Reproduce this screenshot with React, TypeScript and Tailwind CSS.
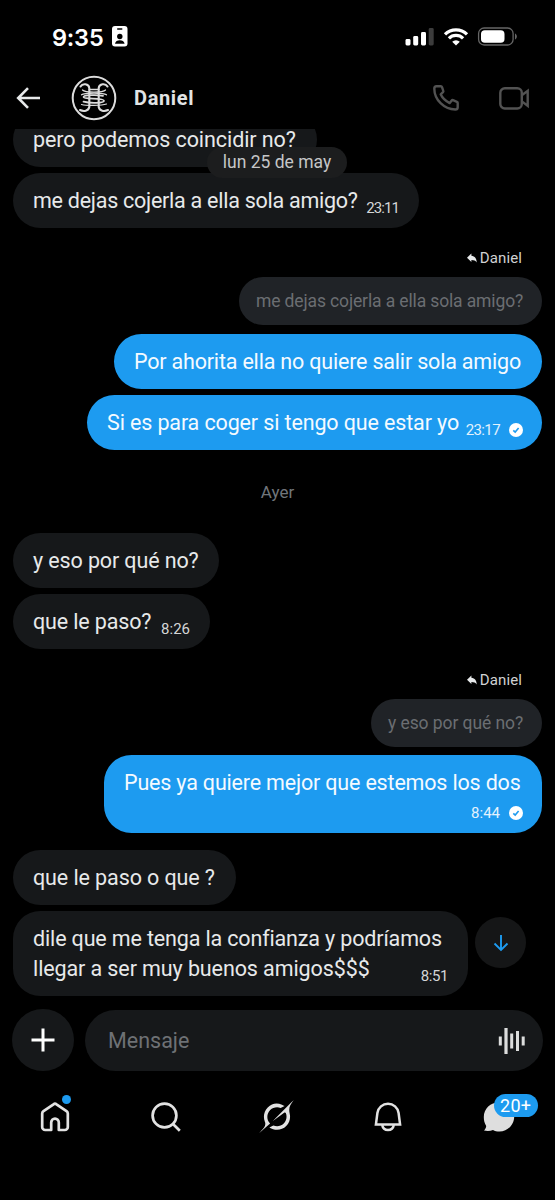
import React from "react";

interface BubbleProps {
  className: string;
  lines: string[];
  tracking: string[];
  time?: string;
  timeClass?: string;
  sent?: boolean;
}

function Check() {
  return (
    <svg viewBox="0 0 14 14" className="ml-[9px] h-[14px] w-[14px]">
      <circle cx="7" cy="7" r="7" fill="#fff" />
      <path d="M4.3 7.3l1.9 1.8 3.4-4" fill="none" stroke="#1d9bf0" strokeWidth="1.6" />
    </svg>
  );
}

function Bubble({ className, lines, tracking, time, timeClass = "", sent = false }: BubbleProps) {
  return (
    <div
      className={`relative shrink-0 rounded-[27.5px] px-5 pt-[13px] text-[21.5px] leading-[30px] whitespace-nowrap ${
        sent ? "self-end bg-[#1d9bf0] text-[#f4faff]" : "bg-[#16181a] text-[#e7e9ea]"
      } ${className}`}
    >
      {lines.map((line, i) => (
        <p key={line} className={tracking[i]}>
          {line}
        </p>
      ))}
      {time && (
        <div
          className={`absolute bottom-[10px] flex items-center text-[15px] leading-5 ${
            sent ? "right-[19px] text-[#e3f2fd]" : "right-5 text-[#d4d6d7]"
          }`}
        >
          <span className={timeClass}>{time}</span>
          {sent && <Check />}
        </div>
      )}
    </div>
  );
}

function Quote({ className, tracking, text }: { className: string; tracking: string; text: string }) {
  return (
    <>
      <div className="mr-[20px] flex shrink-0 items-center gap-[3px] self-end text-[15px] leading-5 text-[#d0d2d3]">
        <svg viewBox="0 0 10 10" className="h-[10px] w-[10px]" fill="#e7e9ea">
          <path d="M4.4 0.4v2.300c3.600.300 5.200 2.900 5.300 6.700C8.600 7.600 6.900 6.900 4.400 6.900v2.100L0 4.700z" />
        </svg>
        <span className="tracking-[0.1px]">Daniel</span>
      </div>
      <div
        className={`mt-[9px] mb-[9px] h-12 shrink-0 self-end rounded-[24px] bg-[#202327] px-[17px] text-[17.5px] leading-[49px] whitespace-nowrap text-[#6b6e72] ${className}`}
      >
        <span className={tracking}>{text}</span>
      </div>
    </>
  );
}

function StatusBar() {
  return (
    <div className="flex h-[60px] shrink-0 items-start pt-[25px]">
      <span className="ml-[52px] w-[60px] pt-px font-['Inter'] text-[23.5px] leading-6 font-semibold tracking-[-0.2px] text-white">
        9:35
      </span>
      <svg viewBox="0 0 16 21" className="mt-[1px] h-[21px] w-4">
        <rect width="15.5" height="20.5" rx="3" fill="#fff" />
        <rect x="5" y="2.2" width="5.5" height="1.5" rx=".7" fill="#000" />
        <circle cx="7.8" cy="10.5" r="2.700" fill="#000" />
        <path d="M3 17.8c.3-2.500 2.500-3.500 4.800-3.500s4.500 1 4.800 3.500z" fill="#000" />
      </svg>
      <svg viewBox="0 0 112 20" className="mt-[2px] mr-[38px] ml-auto h-5 w-[112px]">
        <g fill="#fff">
          <rect x=".5" y="12" width="5" height="6.5" rx="1.4" />
          <rect x="8.2" y="9" width="5" height="9.5" rx="1.4" />
          <rect x="16" y="5" width="5" height="13.5" rx="1.4" />
          <rect x="23.7" y="1" width="5" height="17.5" rx="1.4" fill="#3c3c3c" />
        </g>
        <g fill="none" stroke="#fff" strokeWidth="3.2">
          <path d="M40 7.400a15.500 15.500 0 0 1 22 0" />
          <path d="M43.900 11.400a10 10 0 0 1 14.200 0" />
        </g>
        <path d="M47.200 14.700a5.400 5.400 0 0 1 7.600 0L51 18.500z" fill="#fff" />
        <rect x="73.600" y="1" width="34.500" height="17" rx="5.500" fill="none" stroke="#666" strokeWidth="1.3" />
        <rect x="76" y="3.300" width="23.500" height="12.500" rx="3.800" fill="#fff" />
        <path d="M110 6.500c2.400 1 2.400 5 0 6z" fill="#666" />
      </svg>
    </div>
  );
}

function Header() {
  return (
    <header className="flex h-[69px] shrink-0 items-center pt-[7px]">
      <svg viewBox="0 0 24 22" className="ml-[16px] h-[22px] w-6" fill="none" stroke="#e7e9ea" strokeWidth="2.600">
        <path d="M24 11H2.500M12 1.200L2.200 11l9.800 9.800" />
      </svg>
      <svg viewBox="0 0 46 46" className="ml-[31px] h-[46px] w-[46px]" fill="none" stroke="#dcdcdc">
        <circle cx="23" cy="23" r="21.300" strokeWidth="2" />
        <g strokeWidth="2.100" strokeLinecap="round">
          <path d="M9.500 11.500c2-3.500 8.300-3 8.800 1.500v19c-.8 4-5.500 4.800-9.300 3" />
          <path d="M36.500 11.500c-2-3.500-8.300-3-8.800 1.500v19c.8 4 5.500 4.800 9.300 3" />
          <path d="M18.300 14.500h9.400" strokeWidth="1.500" />
          <path d="M11.500 15c2.500 2.800 20.500 2.800 23 0" strokeWidth="1.200" />
          <path d="M10.500 19.800c3-2.300 22-2.300 25 0" strokeWidth="1.200" />
          <path d="M32 20.800c-6-1-19.500-1-19.500 1.300 0 2.500 20.500.5 20.500 3.700 0 2.500-14 2.700-20.500.9" strokeWidth="1.800" />
          <path d="M10.500 29.500c5 1.300 20 1.300 25-.5" strokeWidth="1.200" />
        </g>
      </svg>
      <h1 className="ml-[17px] text-[20px] font-bold tracking-[0.65px] text-[#e2e4e5]">Daniel</h1>
      <svg viewBox="0 0 26 26" className="mr-[40px] ml-auto h-[26px] w-[26px]" fill="none" stroke="#525252" strokeWidth="2.400" strokeLinejoin="round">
        <path d="M3.500 1.300h4.300c.6 0 1 .3 1.200.9l1.300 3.700c.2.500 0 1-.3 1.300L7.700 9.300c1.500 3.400 5.400 7 9 8.800l2-2.600c.3-.4.800-.5 1.300-.3l3.900 1.600c.5.200.8.600.8 1.100v4.300c0 1.300-1 2.300-2.400 2.300C11 24.200 1.400 14.800 1.300 3.700c0-1.400.8-2.400 2.200-2.400z" />
      </svg>
      <svg viewBox="0 0 31 23" className="mr-[25px] h-[23px] w-[31px]" fill="none" stroke="#525252" strokeWidth="2.400">
        <rect x="1.300" y="1.300" width="21.500" height="20.200" rx="4.500" />
        <path d="M22.800 8.200l5.900-4.400v15l-5.900-4.400" />
      </svg>
    </header>
  );
}

function TabBar() {
  return (
    <nav className="grid h-[60px] w-[554px] shrink-0 grid-cols-5 items-center justify-items-center">
      <div className="relative">
        <svg viewBox="0 0 30 30" className="h-[30px] w-[30px]" fill="none" stroke="#e2e2e2" strokeWidth="2.700" strokeLinejoin="round">
          <path d="M11.200 28H5.200a3 3 0 0 1-3-3V11.600c0-1 .5-1.800 1.300-2.400L13.500 2.300a2.500 2.500 0 0 1 3 0l10 6.900c.8.600 1.300 1.400 1.300 2.400V25a3 3 0 0 1-3 3h-6v-7.500a3.800 3.800 0 0 0-7.600 0z" />
        </svg>
        <span className="absolute -top-[7px] -right-[1px] h-[9px] w-[9px] rounded-full bg-[#1d9bf0]" />
      </div>
      <svg viewBox="0 0 30 30" className="h-[30px] w-[30px]" fill="none" stroke="#e2e2e2" strokeWidth="2.700">
        <circle cx="13.500" cy="13.500" r="11.900" />
        <path d="M22 22l6.800 6.800" />
      </svg>
      <svg viewBox="0 0 24 24" className="-mt-px h-[35px] w-[35px]" fill="#e2e2e2">
        <path d="M9.270 15.290l7.978-5.897c.391-.29.950-.177 1.137.272.980 2.369.542 5.215-1.410 7.169-1.951 1.954-4.667 2.382-7.149 1.406l-2.711 1.257c3.889 2.661 8.611 2.003 11.562-.953 2.341-2.344 3.066-5.539 2.388-8.420l.006.007c-.983-4.232.242-5.924 2.750-9.383.060-.082.120-.164.179-.248l-3.301 3.305v-.010L9.267 15.292M7.623 16.723c-2.792-2.670-2.310-6.801.071-9.184 1.761-1.763 4.647-2.483 7.166-1.425l2.705-1.250a7.808 7.808 0 0 0-1.829-1A8.975 8.975 0 0 0 5.984 5.830c-2.533 2.536-3.330 6.436-1.962 9.764 1.022 2.487-.653 4.246-2.340 6.022-.599.630-1.199 1.259-1.682 1.925l7.620-6.815" />
      </svg>
      <svg viewBox="0 0 28 30" className="h-[30px] w-7" fill="none" stroke="#e2e2e2" strokeWidth="2.500">
        <path d="M1.900 22.600L3.400 11a10.700 10.700 0 0 1 21.200 0l1.500 11.600z" />
        <path d="M8.200 23c.6 3.300 3 5.100 5.800 5.100s5.200-1.800 5.800-5.100" />
      </svg>
      <div className="relative">
        <svg viewBox="0 0 32 30" className="h-[30px] w-8" fill="#dedede">
          <path d="M16 .5c8.600 0 15.200 6 15.200 14 0 8.500-6.600 15-14.700 15-2.600 0-4.700-.5-6.500-1.500-2.500 1-5.700 1.300-9 .5 1.400-1.600 2.100-3 2.200-4.600C1.500 21.300.8 18.300.8 15 .8 6.500 7.500.5 16 .5z" />
        </svg>
        <span className="absolute -top-[8px] left-[11px] h-[23px] w-11 rounded-full bg-[#1d9bf0] text-center text-[18px] leading-[23px] tracking-[0.2px] text-white">
          20+
        </span>
      </div>
    </nav>
  );
}

export default function App() {
  return (
    <div className="flex h-[1200px] w-[555px] flex-col overflow-hidden bg-black font-['Roboto',sans-serif]">
      <StatusBar />
      <Header />

      <main className="relative flex h-[879px] shrink-0 flex-col items-start overflow-hidden px-[13px]">
        <Bubble className="-mt-[17px] h-[55px] w-[304px]" lines={["pero podemos coincidir no?"]} tracking={["tracking-[-0.08px]"]} />
        <Bubble
          className="mt-[6px] h-[55px] w-[406px]"
          lines={["me dejas cojerla a ella sola amigo?"]}
          tracking={["tracking-[-0.26px]"]}
          time="23:11"
          timeClass="tracking-[-0.9px]"
        />

        <div className="h-[20px] shrink-0" />
        <Quote className="w-[303px]" tracking="tracking-[-0.13px]" text="me dejas cojerla a ella sola amigo?" />
        <Bubble
          sent
          className="h-[55px] w-[428px]"
          lines={["Por ahorita ella no quiere salir sola amigo"]}
          tracking={["tracking-[-0.19px]"]}
        />
        <Bubble
          sent
          className="mt-[6px] h-[55px] w-[455px]"
          lines={["Si es para coger si tengo que estar yo"]}
          tracking={["tracking-[-0.13px]"]}
          time="23:17"
          timeClass="tracking-[-0.6px]"
        />

        <p className="mt-[32px] mb-[31px] w-full shrink-0 text-center text-[17px] leading-5 text-[#71767b]">Ayer</p>

        <Bubble className="h-[55px] w-[206px]" lines={["y eso por qué no?"]} tracking={["tracking-[-0.12px]"]} />
        <Bubble
          className="mt-[6px] h-[55px] w-[197px]"
          lines={["que le paso?"]}
          tracking={["tracking-[-0.15px]"]}
          time="8:26"
        />

        <div className="h-[21px] shrink-0" />
        <Quote className="w-[171px]" tracking="tracking-[-0.08px]" text="y eso por qué no?" />
        <Bubble
          sent
          className="-mt-px h-[78px] w-[438px]"
          lines={["Pues ya quiere mejor que estemos los dos"]}
          tracking={["tracking-[-0.18px]"]}
          time="8:44"
        />

        <Bubble className="mt-[17px] h-[55px] w-[223px]" lines={["que le paso o que ?"]} tracking={["tracking-[-0.1px]"]} />
        <Bubble
          className="mt-[6px] h-[85px] w-[455px]"
          lines={["dile que me tenga la confianza y podríamos", "llegar a ser muy buenos amigos$$$"]}
          tracking={["tracking-[-0.15px]", "tracking-[-0.1px]"]}
          time="8:51"
          timeClass="tracking-[-0.4px]"
        />

        <div className="absolute top-[18px] left-[207px] h-[31px] w-[140px] rounded-full bg-[#1c1d1e] text-center text-[17.5px] leading-[31px] text-[#c5c6c7]">
          lun 25 de may
        </div>
        <button className="absolute top-[788px] left-[475px] flex h-[51px] w-[51px] items-center justify-center rounded-full bg-[#151617]">
          <svg viewBox="0 0 16 18" className="h-[18px] w-4" fill="none" stroke="#1d9bf0" strokeWidth="1.900">
            <path d="M8 1v15M1.500 9.500L8 16l6.500-6.500" />
          </svg>
        </button>
      </main>

      <div className="flex shrink-0 items-center gap-[11px] pl-3">
        <button className="flex h-[62px] w-[62px] items-center justify-center rounded-full bg-[#16181a]">
          <svg viewBox="0 0 24 24" className="h-6 w-6" stroke="#fff" strokeWidth="3">
            <path d="M12 .5v23M.5 12h23" />
          </svg>
        </button>
        <div className="mt-[2px] flex h-[61px] w-[458px] items-center justify-between rounded-full bg-[#16181a] pr-[17px] pl-[23px]">
          <span className="pt-px text-[21.5px] text-[#6e7175]">Mensaje</span>
          <svg viewBox="0 0 28 26" className="h-[26px] w-7" fill="#dcdddd">
            <rect x=".8" y="8.500" width="3" height="9" />
            <rect x="6.400" y="0" width="3.200" height="26" />
            <rect x="12.200" y="5.500" width="3" height="15" />
            <rect x="18" y="3" width="3" height="20" />
            <rect x="23.700" y="8.500" width="3" height="9" />
          </svg>
        </div>
      </div>

      <div className="h-[16px] shrink-0" />
      <TabBar />
    </div>
  );
}
